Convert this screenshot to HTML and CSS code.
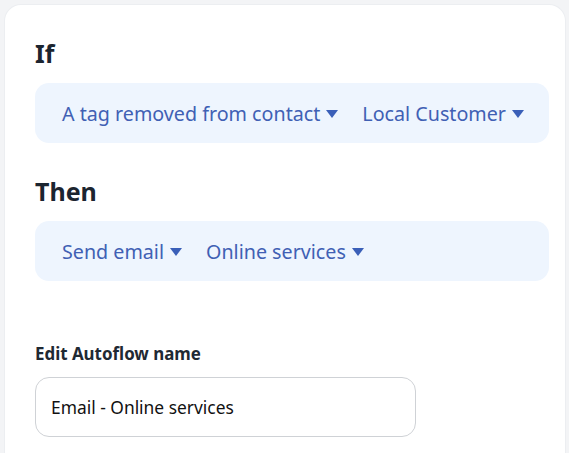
FILE: index.html
```html
<!DOCTYPE html>
<html>
<head>
<meta charset="utf-8">
<link rel="stylesheet" href="styles.css">
</head>
<body>
<div class="card">
  <h2 class="heading">If</h2>
  <div class="rule-box">
    <span class="select">A tag removed from contact<span class="caret"></span></span>
    <span class="select">Local Customer<span class="caret"></span></span>
  </div>
  <h2 class="heading heading-then">Then</h2>
  <div class="rule-box">
    <span class="select">Send email<span class="caret"></span></span>
    <span class="select">Online services<span class="caret"></span></span>
  </div>
  <label class="field-label" for="name">Edit Autoflow name</label>
  <div class="input">Email - Online services</div>
</div>
</body>
</html>
```
FILE: styles.css
```css
html, body {
  margin: 0;
  padding: 0;
}
body {
  background: #f3f4f6;
  font-family: "Noto Sans", "Open Sans", sans-serif;
  width: 569px;
  height: 453px;
  overflow: hidden;
}
.card {
  margin: 5px 4px 0 5px;
  background: #ffffff;
  border-radius: 16px;
  padding: 32px 16px 40px 30px;
  box-shadow: 0 0 0 1px #eceef1;
}
.heading {
  margin: 0;
  font-size: 25px;
  line-height: 33px;
  font-weight: 700;
  color: #1c2530;
}
.heading-then {
  margin-top: 32px;
}
.rule-box {
  margin-top: 13px;
  height: 60px;
  background: #eef5fe;
  border-radius: 14px;
  display: flex;
  align-items: center;
  padding-left: 27px;
  gap: 24px;
}
.select {
  display: inline-flex;
  align-items: center;
  gap: 6px;
  font-size: 19.7px;
  color: #4060b4;
}
.caret {
  width: 0;
  height: 0;
  border-left: 6px solid transparent;
  border-right: 6px solid transparent;
  border-top: 8px solid #3a5fb8;
  margin-top: 1px;
}
.field-label {
  display: block;
  margin-top: 62px;
  font-size: 16.9px;
  line-height: 22px;
  font-weight: 700;
  color: #1f2933;
}
.input {
  margin-top: 12px;
  width: 381px;
  height: 60px;
  box-sizing: border-box;
  border: 1px solid #cfd2d6;
  border-radius: 14px;
  padding-left: 15px;
  display: flex;
  align-items: center;
  font-size: 17.4px;
  color: #111111;
}
```
